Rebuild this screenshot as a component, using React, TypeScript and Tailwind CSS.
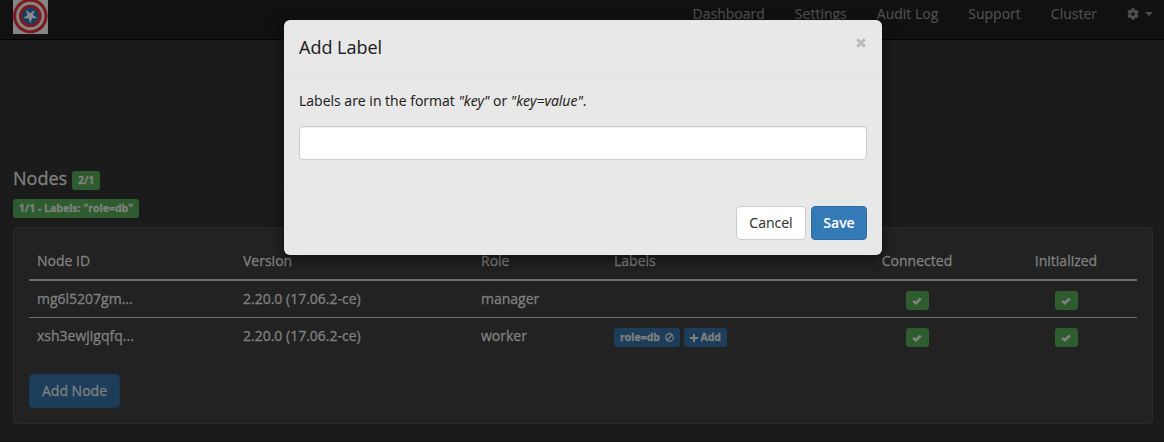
import React from "react";
import { FaCog } from "react-icons/fa";

const navItems = ["Dashboard", "Settings", "Audit Log", "Support", "Cluster"];

const nodes = [
  { id: "mg6l5207gm...", version: "2.20.0 (17.06.2-ce)", role: "manager", label: "" },
  { id: "xsh3ewjigqfq...", version: "2.20.0 (17.06.2-ce)", role: "worker", label: "role=db" },
];

const columns = "grid grid-cols-[206px_238px_133px_233px_156px_142px]";

function Logo() {
  return (
    <svg width="35" height="34" viewBox="0 0 35 34" className="block">
      <rect width="35" height="34" fill="#858585" />
      <circle cx="17.3" cy="16" r="17.3" fill="#7b1a1f" />
      <circle cx="17.3" cy="16" r="14.2" fill="#858585" />
      <circle cx="17.3" cy="16" r="11.3" fill="#7b1a1f" />
      <circle cx="17.3" cy="16" r="8.3" fill="#123f60" />
      <path
        d="M17.3 8.6 19 13.7 24.4 13.7 20 16.9 21.7 22 17.3 18.9 12.9 22 14.6 16.9 10.2 13.7 15.6 13.7Z"
        fill="#8a8a8a"
        transform="rotate(180 17.3 16)"
      />
    </svg>
  );
}

function CheckBadge() {
  return (
    <span className="flex h-[19px] w-[23px] items-center justify-center rounded-[3px] bg-[#2e5c2e]">
      <svg width="10" height="8" viewBox="0 0 10 8">
        <path d="M1.2 3.9 3.8 6.2 8.8 1.5" fill="none" stroke="#808080" strokeWidth="2.6" />
      </svg>
    </span>
  );
}

function LabelBadges({ label }: { label: string }) {
  return (
    <div className="flex gap-1 text-[10.5px] leading-[19px] font-bold">
      <span className="flex h-[19px] w-[66px] items-center justify-between rounded-[3px] bg-[#1c3e5b] pr-[6px] pl-[6px]">
        {label}
        <svg width="9" height="9" viewBox="0 0 9 9">
          <circle cx="4.5" cy="4.5" r="3.8" fill="none" stroke="#808080" strokeWidth="1.2" />
          <path d="M2 7 7 2" stroke="#808080" strokeWidth="1.2" />
        </svg>
      </span>
      <span className="flex h-[19px] w-[43px] items-center justify-between rounded-[3px] bg-[#1c3e5b] px-[6px]">
        <svg width="8" height="8" viewBox="0 0 8 8">
          <path d="M4 0V8M0 4H8" stroke="#808080" strokeWidth="2" />
        </svg>
        Add
      </span>
    </div>
  );
}

function AddLabelDialog() {
  return (
    <div
      role="dialog"
      className="absolute top-5 left-[284px] flex h-[235px] w-[598px] flex-col rounded-[6px] bg-[#e8e8e8] text-[14px] leading-5 text-[#1f1f24] shadow-[0_5px_15px_rgba(0,0,0,0.5)] [-webkit-text-stroke:0.1px]"
    >
      <div className="flex h-[56px] items-start justify-between border-b border-[#e3e3e3] pt-[15px] pr-[16px] pl-[15px]">
        <h4 className="text-[18px] leading-[25px]">Add Label</h4>
        <svg width="10" height="10" viewBox="0 0 10 10" className="mt-[3px]">
          <path d="M1.2 1.2 8.8 8.8M8.8 1.2 1.2 8.8" stroke="#b9b9b9" strokeWidth="2.9" />
        </svg>
      </div>
      <div className="flex h-[114px] flex-col px-[15px] pt-[15px]">
        <p>
          Labels are in the format <em>"key"</em> or <em>"key=value"</em>.
        </p>
        <input
          aria-label="Label"
          className="mt-[15px] h-[34px] w-full rounded-[4px] border border-[#cccccc] bg-white px-3 shadow-[inset_0_1px_1px_rgba(0,0,0,0.075)] outline-none"
        />
      </div>
      <div className="flex flex-1 items-start justify-end gap-[5px] border-t border-[#e3e3e3] px-[15px] pt-[15px]">
        <button className="h-[34px] w-[70px] rounded-[4px] border border-[#cccccc] bg-white text-[#333333]">
          Cancel
        </button>
        <button className="h-[34px] w-[56px] rounded-[4px] border border-[#2e6da4] bg-[#337ab7] font-semibold text-white">
          Save
        </button>
      </div>
    </div>
  );
}

export default function App() {
  return (
    <div className="relative flex h-[442px] w-[1164px] flex-col overflow-hidden border-b border-[#110c0d] bg-[#1b1b1b] font-['Open_Sans',sans-serif] text-[14px] leading-5 text-[#808080]">
      <header className="flex h-10 shrink-0 items-start justify-between border-b border-[#050505] bg-[#111111] pl-[13px]">
        <Logo />
        <nav className="flex items-start gap-[30px] pt-1 pr-[11px] text-[#4f4f4f] [-webkit-text-stroke:0.2px]">
          {navItems.map((item) => (
            <a key={item}>{item}</a>
          ))}
          <span className="flex h-5 items-center gap-[6px]">
            <FaCog size={12} />
            <svg width="8" height="4" viewBox="0 0 8 4">
              <path d="M0 0H8L4 4Z" fill="currentColor" stroke="none" />
            </svg>
          </span>
        </nav>
      </header>
      <main className="flex flex-col px-[13px] pt-[126px] [-webkit-text-stroke:0.3px]">
        <div className="flex h-6 items-start gap-[5px]">
          <h4 className="text-[18px] leading-6">Nodes</h4>
          <span className="mt-[5px] h-[19px] w-7 rounded-[3px] bg-[#2e5c2e] text-center text-[10.5px] leading-[19px] font-bold">
            2/1
          </span>
        </div>
        <span className="mt-[9px] h-[19px] w-[126px] rounded-[3px] bg-[#2e5c2e] text-center text-[10.5px] leading-[19px] font-bold whitespace-nowrap">
          1/1 - Labels: "role=db"
        </span>
        <section className="mt-[9px] h-[197px] w-[1140px] rounded-[4px] border border-[#2a2a2a] bg-[#222222] p-[15px]">
          <div className={columns + " h-[38px] border-b-2 border-[#6f6f6f] pt-2"}>
            <span className="pl-2">Node ID</span>
            <span className="pl-2">Version</span>
            <span className="pl-2">Role</span>
            <span className="pl-2">Labels</span>
            <span className="text-center">Connected</span>
            <span className="text-center">Initialized</span>
          </div>
          {nodes.map((node, index) => (
            <div
              key={node.id}
              className={columns + (index > 0 ? " h-[37px] border-t border-[#6f6f6f] pt-2" : " h-[36px] pt-2")}
            >
              <span className="pl-2">{node.id}</span>
              <span className="pl-2">{node.version}</span>
              <span className="pl-2">{node.role}</span>
              <span className="pt-[2px] pl-2">{node.label && <LabelBadges label={node.label} />}</span>
              <span className="flex justify-center pt-[2px]">
                <CheckBadge />
              </span>
              <span className="flex justify-center pt-[2px]">
                <CheckBadge />
              </span>
            </div>
          ))}
          <button className="mt-5 h-[34px] w-[91px] rounded-[4px] border border-[#193855] bg-[#1c3e5b]">
            Add Node
          </button>
        </section>
      </main>
      <AddLabelDialog />
    </div>
  );
}
